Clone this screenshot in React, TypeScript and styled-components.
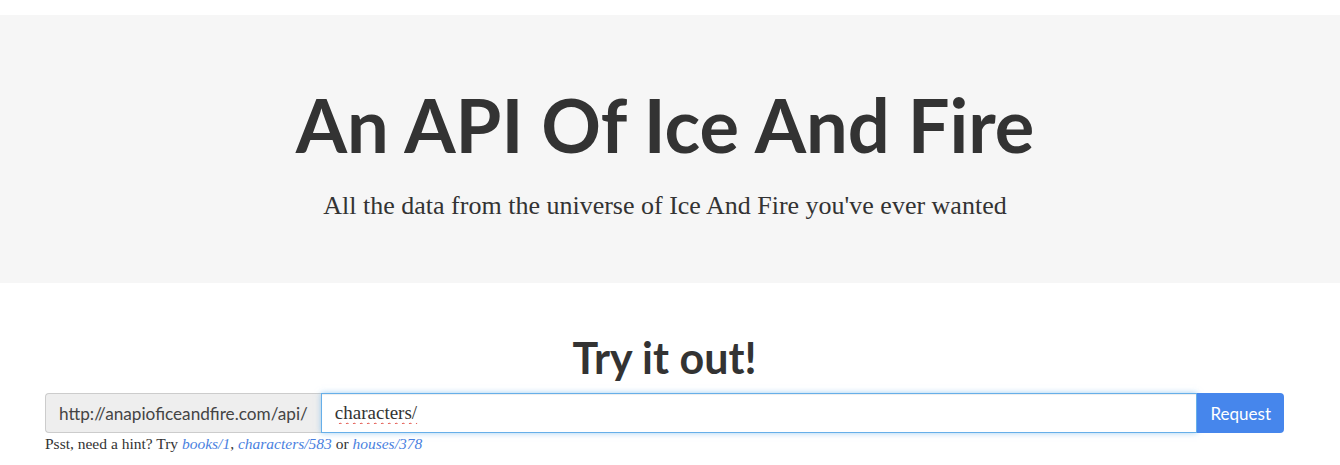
import styled, { createGlobalStyle } from "styled-components";

const Global = createGlobalStyle`
    body {
        margin: 0;
        background: #fff;
        color: #333;
        font-family: "Liberation Serif", serif;
    }
`;

const Page = styled.div`
    padding-top: 15px;
`;

const Jumbotron = styled.header`
    background: #f6f6f6;
    height: 268px;
    display: flex;
    flex-direction: column;
    align-items: center;
    padding-right: 10px;
    box-sizing: border-box;
`;

const Title = styled.h1`
    margin: 68px 0 0;
    font-family: Lato, "Open Sans", sans-serif;
    font-weight: 700;
    font-size: 74px;
    line-height: 84px;
    color: #333;
`;

const Subtitle = styled.p`
    margin: 24px 0 0;
    font-family: "Liberation Serif", serif;
    font-size: 26px;
    line-height: 30px;
    color: #333;
`;

const Section = styled.section`
    padding: 0 56px 0 45px;
    display: flex;
    flex-direction: column;
`;

const Heading = styled.h2`
    margin: 49px 0 10px;
    text-align: center;
    font-family: Lato, "Open Sans", sans-serif;
    font-weight: 700;
    font-size: 43px;
    line-height: 51px;
    color: #333;
`;

const InputGroup = styled.div`
    display: flex;
    height: 40px;
`;

const Addon = styled.span`
    display: flex;
    align-items: center;
    padding: 0 13px;
    background: #eee;
    border: 1px solid #ccc;
    border-right: none;
    border-radius: 4px 0 0 4px;
    font-family: Lato, "Open Sans", sans-serif;
    font-size: 17.2px;
    color: #444;
    white-space: nowrap;
`;

const Field = styled.input`
    flex: 1;
    min-width: 0;
    padding: 0 13px;
    border: 1px solid #66afe9;
    box-shadow: inset 0 1px 1px rgba(0, 0, 0, 0.075), 0 0 6px rgba(102, 175, 233, 0.6);
    outline: none;
    font-family: "Liberation Serif", serif;
    font-size: 19px;
    color: #333;
    text-decoration: underline wavy #e0443a;
    text-decoration-thickness: 1px;
    text-underline-offset: 3px;
`;

const Button = styled.button`
    border: none;
    background: #4686ec;
    color: #fff;
    padding: 0 13px;
    border-radius: 0 4px 4px 0;
    font-family: Lato, "Open Sans", sans-serif;
    font-size: 17px;
`;

const Hint = styled.p`
    margin: 2px 0 0;
    font-size: 15.5px;
    color: #333;
`;

const Link = styled.a`
    color: #4a7fe0;
    font-style: italic;
    text-decoration: none;
`;

export default function App() {
    return (
        <Page>
            <Global />
            <Jumbotron>
                <Title>An API Of Ice And Fire</Title>
                <Subtitle>All the data from the universe of Ice And Fire you've ever wanted</Subtitle>
            </Jumbotron>
            <Section>
                <Heading>Try it out!</Heading>
                <InputGroup>
                    <Addon>http://anapioficeandfire.com/api/</Addon>
                    <Field defaultValue="characters/" spellCheck={false} />
                    <Button>Request</Button>
                </InputGroup>
                <Hint>
                    Psst, need a hint? Try <Link href="#">books/1</Link>, <Link href="#">characters/583</Link> or{" "}
                    <Link href="#">houses/378</Link>
                </Hint>
            </Section>
        </Page>
    );
}
